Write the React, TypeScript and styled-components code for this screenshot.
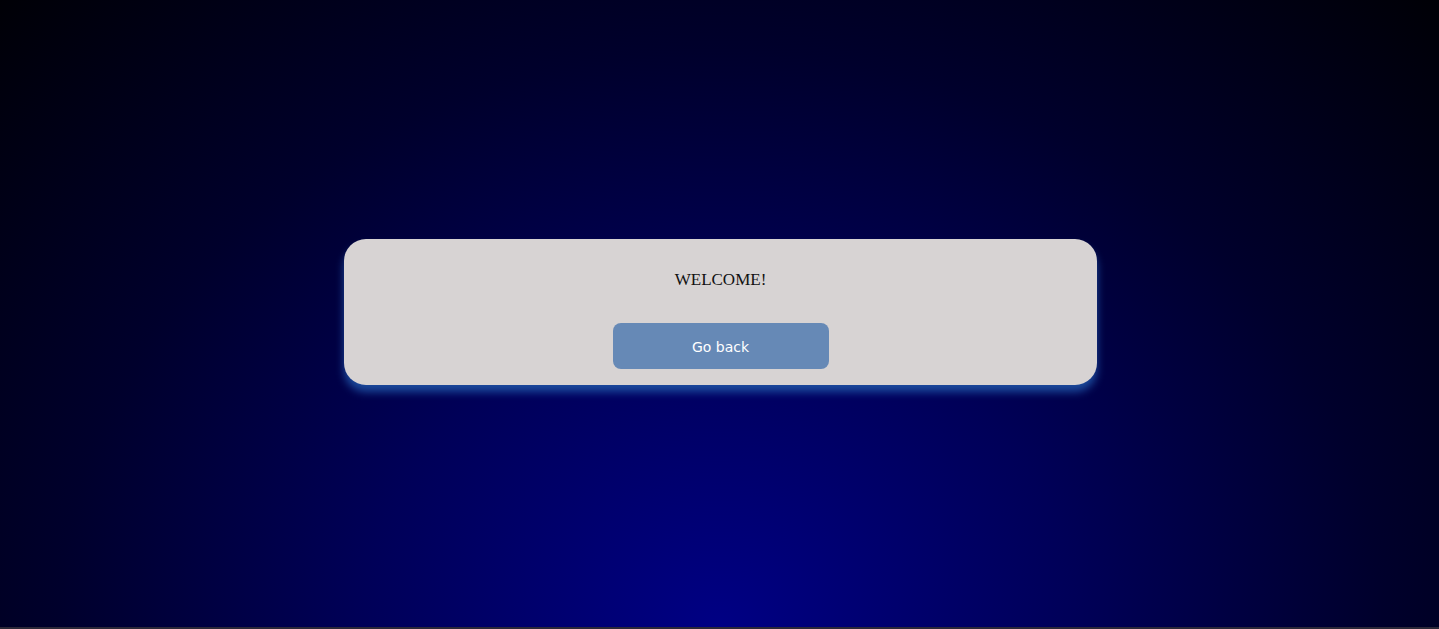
import React from "react";
import styled, { createGlobalStyle } from "styled-components";

const GlobalStyle = createGlobalStyle`
  html, body { margin: 0; padding: 0; height: 100%; }
  body { background: #000; overflow: hidden; }
  #root { height: 100%; }
`;

const Page = styled.div`
  height: 100vh;
  display: flex;
  flex-direction: column;
  background: radial-gradient(ellipse at 50% 100%, #000084 0%, #000058 35%, #00002c 65%, #000006 100%);
`;

const Main = styled.main`
  flex: 1;
  display: flex;
  align-items: center;
  justify-content: center;
  padding-bottom: 4px;
  padding-left: 2px;
`;

const BottomEdge = styled.div`
  height: 2px;
  background: #2b2838;
`;

const Card = styled.section`
  width: 753px;
  box-sizing: border-box;
  padding: 30px 20px 16px;
  background: #d7d3d3;
  border-radius: 22px;
  box-shadow: 0 7px 8px rgba(28, 78, 160, 0.95);
  display: flex;
  flex-direction: column;
  align-items: center;
`;

const Title = styled.h1`
  margin: 0;
  font-family: "Liberation Serif", "Times New Roman", serif;
  font-weight: normal;
  font-size: 17px;
  line-height: 22px;
  color: #111;
`;

const Button = styled.button`
  margin-top: 32px;
  width: 216px;
  height: 46px;
  padding: 2px 0 0;
  border: none;
  border-radius: 8px;
  background: #6689b6;
  color: #fff;
  font-family: "DejaVu Sans", Verdana, sans-serif;
  font-size: 14px;
  cursor: pointer;
`;

export default function App() {
  return (
    <>
      <GlobalStyle />
      <Page>
        <Main>
          <Card>
            <Title>WELCOME!</Title>
            <Button>Go back</Button>
          </Card>
        </Main>
        <BottomEdge />
      </Page>
    </>
  );
}
